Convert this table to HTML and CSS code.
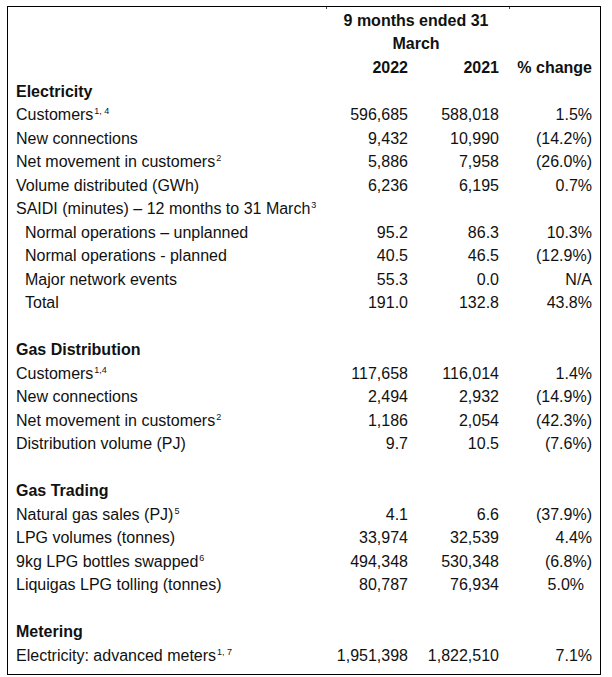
FILE: index.html
```html
<!DOCTYPE html>
<html>
<head>
<meta charset="utf-8">
<link rel="stylesheet" href="styles.css">
</head>
<body>
<div class="sheet">
  <span class="tick tick-a"></span><span class="tick tick-b"></span>
  <div class="row head-title-row"><div class="lbl"></div><div class="title">9 months ended 31<br>March</div></div>
  <div class="row head"><div class="lbl"></div><div class="num">2022</div><div class="num">2021</div><div class="num">% change</div></div>

  <div class="row section"><div class="lbl">Electricity</div></div>
  <div class="row"><div class="lbl">Customers<sup>1, 4</sup></div><div class="num">596,685</div><div class="num">588,018</div><div class="num">1.5%</div></div>
  <div class="row"><div class="lbl">New connections</div><div class="num">9,432</div><div class="num">10,990</div><div class="num">(14.2%)</div></div>
  <div class="row"><div class="lbl">Net movement in customers<sup>2</sup></div><div class="num">5,886</div><div class="num">7,958</div><div class="num">(26.0%)</div></div>
  <div class="row"><div class="lbl">Volume distributed (GWh)</div><div class="num">6,236</div><div class="num">6,195</div><div class="num">0.7%</div></div>
  <div class="row"><div class="lbl wide">SAIDI (minutes) – 12 months to 31 March<sup>3</sup></div></div>
  <div class="row"><div class="lbl sub">Normal operations – unplanned</div><div class="num">95.2</div><div class="num">86.3</div><div class="num">10.3%</div></div>
  <div class="row"><div class="lbl sub">Normal operations - planned</div><div class="num">40.5</div><div class="num">46.5</div><div class="num">(12.9%)</div></div>
  <div class="row"><div class="lbl sub">Major network events</div><div class="num">55.3</div><div class="num">0.0</div><div class="num">N/A</div></div>
  <div class="row"><div class="lbl sub">Total</div><div class="num">191.0</div><div class="num">132.8</div><div class="num">43.8%</div></div>
  <div class="row"></div>

  <div class="row section"><div class="lbl">Gas Distribution</div></div>
  <div class="row"><div class="lbl">Customers<sup>1,4</sup></div><div class="num">117,658</div><div class="num">116,014</div><div class="num">1.4%</div></div>
  <div class="row"><div class="lbl">New connections</div><div class="num">2,494</div><div class="num">2,932</div><div class="num">(14.9%)</div></div>
  <div class="row"><div class="lbl">Net movement in customers<sup>2</sup></div><div class="num">1,186</div><div class="num">2,054</div><div class="num">(42.3%)</div></div>
  <div class="row"><div class="lbl">Distribution volume (PJ)</div><div class="num">9.7</div><div class="num">10.5</div><div class="num">(7.6%)</div></div>
  <div class="row"></div>

  <div class="row section"><div class="lbl">Gas Trading</div></div>
  <div class="row"><div class="lbl">Natural gas sales (PJ)<sup>5</sup></div><div class="num">4.1</div><div class="num">6.6</div><div class="num">(37.9%)</div></div>
  <div class="row"><div class="lbl">LPG volumes (tonnes)</div><div class="num">33,974</div><div class="num">32,539</div><div class="num">4.4%</div></div>
  <div class="row"><div class="lbl">9kg LPG bottles swapped<sup>6</sup></div><div class="num">494,348</div><div class="num">530,348</div><div class="num">(6.8%)</div></div>
  <div class="row"><div class="lbl">Liquigas LPG tolling (tonnes)</div><div class="num">80,787</div><div class="num">76,934</div><div class="num pad">5.0%</div></div>
  <div class="row"></div>

  <div class="row section"><div class="lbl">Metering</div></div>
  <div class="row"><div class="lbl">Electricity: advanced meters<sup>1, 7</sup></div><div class="num">1,951,398</div><div class="num">1,822,510</div><div class="num">7.1%</div></div>
</div>
</body>
</html>
```

FILE: styles.css
```css
html, body {
  margin: 0;
  padding: 0;
  background: #fff;
}

body {
  font-family: "Liberation Sans", Arial, sans-serif;
  font-size: 16px;
  color: #111;
}

.sheet {
  position: relative;
  box-sizing: border-box;
  margin: 6px 0 0 7px;
  width: 594px;
  height: 669px;
  border: 1px solid #000;
  padding: 2px 8px 0 8px;
}

.tick {
  position: absolute;
  top: 0;
  width: 1px;
  height: 2px;
  background: #444;
}
.tick-a { left: 318px; }
.tick-b { left: 501px; }

.row {
  display: grid;
  grid-template-columns: 1fr 91px 91px 93px;
  height: 23.5px;
  line-height: 23.5px;
  white-space: nowrap;
}

.head-title-row {
  height: 47px;
}

.title {
  grid-column: 2 / 4;
  margin-left: 16px;
  text-align: center;
  font-weight: bold;
  line-height: 23px;
}

.head .num {
  font-weight: bold;
}

.section .lbl {
  font-weight: bold;
}

.lbl.wide {
  grid-column: 1 / 5;
}

.lbl.sub {
  padding-left: 9px;
}

.num {
  text-align: right;
}

.num.pad {
  padding-right: 8px;
}

sup {
  font-size: 9px;
  line-height: 0;
  vertical-align: 6px;
  margin-left: 1px;
}
```
